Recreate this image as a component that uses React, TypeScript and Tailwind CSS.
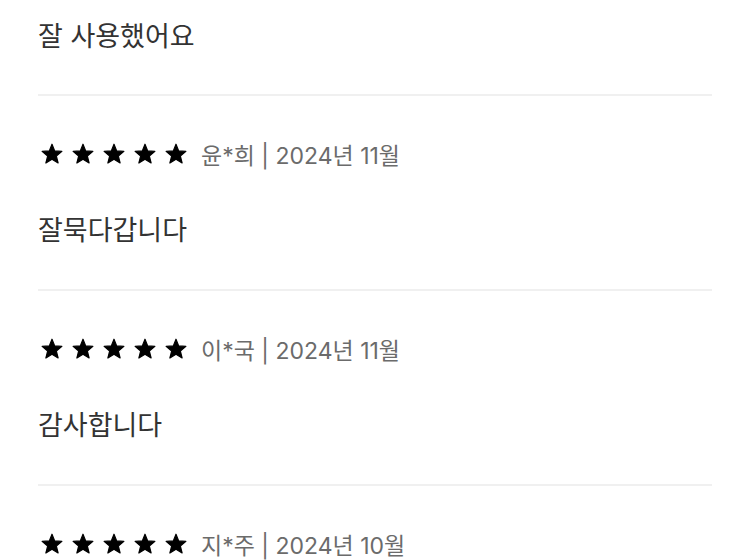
import React from "react";

const starPoints = (() => {
  const pts: string[] = [];
  const cx = 12;
  const cy = 12.6;
  for (let i = 0; i < 10; i++) {
    const r = i % 2 === 0 ? 10.4 : 4.6;
    const a = (Math.PI / 5) * i - Math.PI / 2;
    pts.push(`${(cx + r * Math.cos(a)).toFixed(2)},${(cy + r * Math.sin(a)).toFixed(2)}`);
  }
  return pts.join(" ");
})();

const Star = () => (
  <svg width="24" height="24" viewBox="0 0 24 24" className="shrink-0">
    <polygon
      points={starPoints}
      fill="#000000"
      stroke="#000000"
      strokeWidth="1.2"
      strokeLinejoin="round"
    />
  </svg>
);

const reviews = [
  { name: "윤*희", date: "2024년 11월", text: "잘묵다갑니다" },
  { name: "이*국", date: "2024년 11월", text: "감사합니다" },
  { name: "지*주", date: "2024년 10월", text: "좋아요" },
];

export default function App() {
  return (
    <div
      className="w-[750px] h-[560px] overflow-hidden bg-white px-[38px]"
      style={{ fontFamily: 'Inter, "Noto Sans CJK KR", "Noto Sans", sans-serif' }}
    >
      <div className="pt-[22px] pb-[42px] border-b-2 border-[#f0f0f0]">
        <p className="h-[30px] leading-[30px] text-[27px] text-[#333333]">잘 사용했어요</p>
      </div>
      {reviews.map((r, i) => (
        <div key={i} className="pt-[46px] pb-[43px] border-b-2 border-[#f0f0f0]">
          <div className="flex items-center h-[24px] pl-[2px]">
            <div className="flex gap-[7px]">
              <Star />
              <Star />
              <Star />
              <Star />
              <Star />
            </div>
            <span className="ml-[13px] pt-[3px] text-[23px] leading-[24px] text-[#6b6b6b] whitespace-nowrap">
              {r.name} | {r.date}
            </span>
          </div>
          <p className="mt-[50px] h-[30px] leading-[30px] text-[27px] text-[#333333]">{r.text}</p>
        </div>
      ))}
    </div>
  );
}
